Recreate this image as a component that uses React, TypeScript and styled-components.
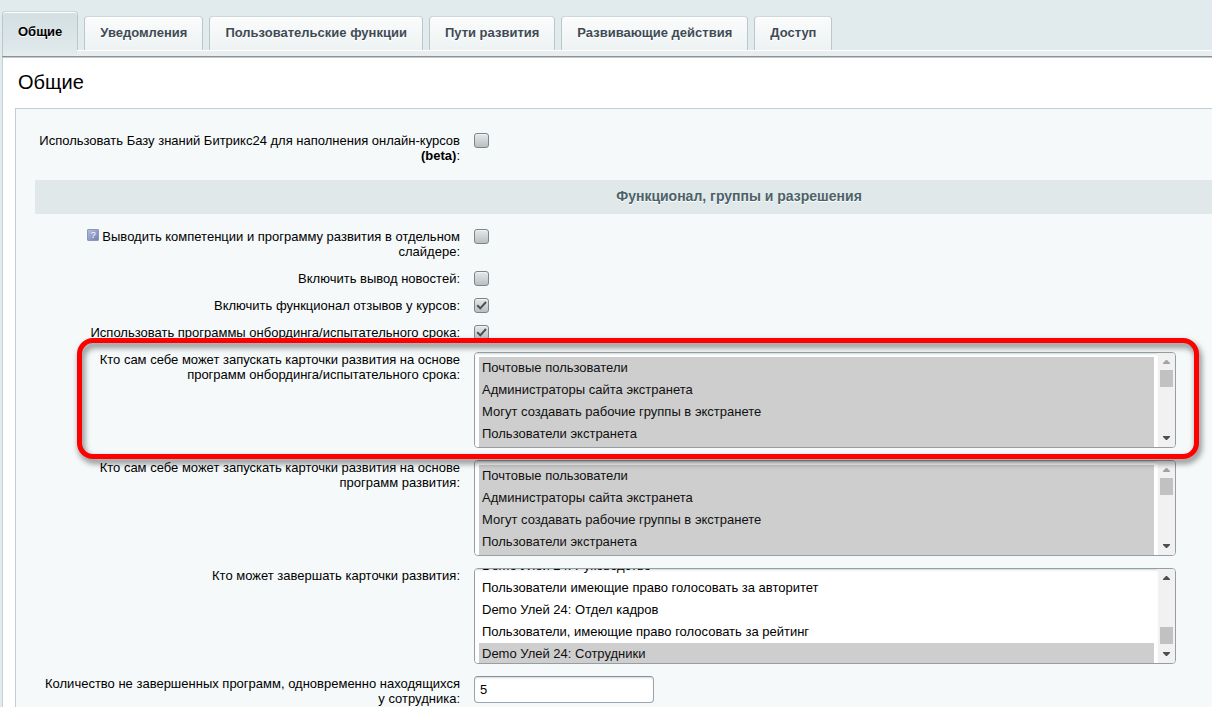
import React, { useEffect, useRef } from "react";
import styled, { createGlobalStyle } from "styled-components";

const GlobalStyle = createGlobalStyle`
  * { box-sizing: border-box; }
  html { overflow: auto; scrollbar-width: none; }
  body {
    margin: 0;
    background: #e1eaec;
    color: #000;
    font: 13px/15px "Liberation Sans", Arial, sans-serif;
  }
`;

const Page = styled.div`
  min-width: 1463px;
  padding-left: 2px;
`;

const TabBar = styled.nav`
  display: flex;
  align-items: flex-end;
  gap: 6px;
  padding-top: 11px;
`;

const Tab = styled.button<{ $active?: boolean }>`
  position: relative;
  height: ${(p) => (p.$active ? 39 : 34)}px;
  padding: ${(p) => (p.$active ? "0 15px" : "0 15px 2px")};
  border: 1px solid #bcc7cb;
  border-top-color: #cdd7da;
  border-bottom: 0;
  border-radius: 4px 4px 0 0;
  background: ${(p) =>
    p.$active
      ? "linear-gradient(#d3dfe1, #dfe8ea)"
      : "linear-gradient(#fbfcfc, #edf2f3)"};
  box-shadow: inset 0 1px 0 #fff;
  color: ${(p) => (p.$active ? "#000" : "#3f4b54")};
  font: bold 13px/15px "Liberation Sans", Arial, sans-serif;
  text-shadow: 0 1px 0 #fff;
  white-space: nowrap;

  &::after {
    content: ${(p) => (p.$active ? '""' : "none")};
    position: absolute;
    top: 100%;
    left: -1px;
    right: 0;
    height: 6px;
    border-left: 1px solid #bcc7cb;
    background: linear-gradient(#dfe8ea, #e8eeef);
  }
`;

const TabRule = styled.div`
  height: 8px;
  border-top: 1px solid #fff;
  border-bottom: 1px solid #c3c8ca;
  box-shadow: inset 0 -1px 0 #8b9296;
  background: #e8eeef;
`;

const Content = styled.main`
  padding: 13px 0 0 12px;
  border-left: 1px solid #c5d1d5;
  background: #fff;
`;

const Title = styled.h1`
  margin: 0 0 15px 3px;
  font-size: 20px;
  line-height: 22px;
  font-weight: normal;
`;

const Form = styled.form`
  padding: 19px;
  border: 1px solid #c2ced5;
  background: #f5f9f9;
`;

const Row = styled.div`
  position: relative;
  display: grid;
  grid-template-columns: 425px 1fr;
  column-gap: 14px;
  align-items: start;
  padding: 5px 0 7px;
`;

const Label = styled.label`
  padding-left: 3px;
  text-align: right;
`;

const SectionTitle = styled.h2`
  margin: 10px 0;
  padding: 8px 8px 10px;
  background: #e0e8ea;
  color: #4b6267;
  font-size: 14px;
  line-height: 16px;
  text-align: center;
  text-shadow: 0 1px 0 #fff;
`;

const Hint = styled.span`
  display: inline-block;
  width: 12px;
  height: 12px;
  margin-right: 3px;
  border: 1px solid #8d98c2;
  border-radius: 1px;
  background: linear-gradient(135deg, #b3bddb, #7681b3);
  color: #fff;
  font-size: 9px;
  line-height: 11px;
  text-align: center;
  vertical-align: top;
`;

const CheckBox = styled.span`
  position: relative;
  display: block;
  width: 15px;
  height: 15px;

  input {
    display: block;
    appearance: none;
    width: 15px;
    height: 15px;
    margin: 0;
    border: 1px solid #7c8589;
    border-radius: 3px;
    background: linear-gradient(#e6e8e9, #b9bfc2);
    box-shadow: inset 0 1px 0 #f0f2f2;
  }
  svg {
    position: absolute;
    inset: 0;
    display: none;
    pointer-events: none;
  }
  input:checked + svg { display: block; }
`;

const ListFrame = styled.div`
  position: relative;
  display: flex;
  width: 702px;
  height: 96px;
  overflow: hidden;
  border: 1px solid #979ea2;
  border-radius: 4px;
  background: #fff;
`;

const List = styled.select`
  flex: 1;
  min-width: 0;
  height: 94px;
  margin: 0;
  padding: 4px;
  border: 0;
  outline: 0;
  background: #fff;
  box-shadow: inset 0 2px 2px -1px #cfd8da;
  color: #000;
  font: 13px/15px "Liberation Sans", Arial, sans-serif;
  scrollbar-width: none;

  option {
    min-height: 22px;
    padding: 3px 3px 4px;
  }
`;

const Track = styled.div`
  display: flex;
  flex-direction: column;
  width: 17px;
  background: #f1f1f1;
`;

const Arrow = styled.svg`
  width: 17px;
  height: 17px;
`;

const Thumb = styled.div<{ $end?: boolean }>`
  width: 13px;
  height: 17px;
  margin: ${(p) => (p.$end ? "auto 2px 2px" : "0 2px auto")};
  background: #c1c1c1;
`;

const NumberBox = styled.input`
  width: 180px;
  height: 27px;
  padding: 0 5px;
  border: 1px solid #9aa4ae;
  border-top-color: #87919c;
  border-radius: 4px;
  background: #fff;
  box-shadow: inset 0 2px 2px -1px #d3dbdd;
  font: 13px/15px "Liberation Sans", Arial, sans-serif;
`;

const Highlight = styled.div`
  position: absolute;
  z-index: 2;
  top: -9px;
  left: 42px;
  width: 1122px;
  height: 121px;
  border: 5px solid #fe0000;
  border-radius: 16px;
  filter: drop-shadow(2px 4px 3px rgba(0, 0, 0, 0.55));
  pointer-events: none;
`;

const tabs = [
  "Общие",
  "Уведомления",
  "Пользовательские функции",
  "Пути развития",
  "Развивающие действия",
  "Доступ",
];

const extranetGroups = [
  "Почтовые пользователи",
  "Администраторы сайта экстранета",
  "Могут создавать рабочие группы в экстранете",
  "Пользователи экстранета",
  "Demo Улей 24: Руководство",
];

const finishGroups = [
  "Почтовые пользователи",
  "Пользователи экстранета",
  "Demo Улей 24: Руководство",
  "Пользователи имеющие право голосовать за авторитет",
  "Demo Улей 24: Отдел кадров",
  "Пользователи, имеющие право голосовать за рейтинг",
  "Demo Улей 24: Сотрудники",
];

function CheckRow(props: { id: string; checked?: boolean; children: React.ReactNode }) {
  return (
    <Row>
      <Label htmlFor={props.id}>{props.children}</Label>
      <CheckBox>
        <input type="checkbox" id={props.id} defaultChecked={props.checked} />
        <svg width="15" height="15" viewBox="0 0 15 15" fill="none">
          <path d="M3.2 7.2 L6.3 10.3 L12 4" stroke="#4b5256" strokeWidth="2" />
        </svg>
      </CheckBox>
    </Row>
  );
}

function ListRow(props: {
  id: string;
  options: string[];
  selected: string[];
  scrolled?: number;
  marked?: boolean;
  children: React.ReactNode;
}) {
  const list = useRef<HTMLSelectElement>(null);
  const scrolled = props.scrolled ?? 0;

  // The browser first scrolls a list to its selected option; ours comes after that.
  useEffect(() => {
    let frame = requestAnimationFrame(() => {
      frame = requestAnimationFrame(() => {
        if (list.current) list.current.scrollTop = scrolled;
      });
    });
    return () => cancelAnimationFrame(frame);
  }, [scrolled]);

  return (
    <Row>
      <Label htmlFor={props.id}>{props.children}</Label>
      <ListFrame>
        <List id={props.id} ref={list} multiple size={4} defaultValue={props.selected}>
          {props.options.map((name) => (
            <option key={name}>{name}</option>
          ))}
        </List>
        <Track aria-hidden="true">
          <Arrow viewBox="0 0 17 17">
            <path d="M5 11h7v-1L9 7H8L5 10z" fill={scrolled > 0 ? "#505050" : "#a3a3a3"} />
          </Arrow>
          <Thumb $end={scrolled > 0} />
          <Arrow viewBox="0 0 17 17">
            <path d="M5 6h7v1L9 10H8L5 7z" fill="#505050" />
          </Arrow>
        </Track>
      </ListFrame>
      {props.marked && <Highlight />}
    </Row>
  );
}

export default function App() {
  return (
    <>
      <GlobalStyle />
      <Page>
        <TabBar>
          {tabs.map((name, i) => (
            <Tab key={name} type="button" $active={i === 0}>
              {name}
            </Tab>
          ))}
        </TabBar>
        <TabRule />
        <Content>
          <Title>Общие</Title>
          <Form>
            <CheckRow id="knowledge">
              Использовать Базу знаний Битрикс24 для наполнения онлайн-курсов <b>(beta)</b>:
            </CheckRow>
            <SectionTitle>Функционал, группы и разрешения</SectionTitle>
            <CheckRow id="slider">
              <Hint>?</Hint>
              Выводить компетенции и программу развития в отдельном слайдере:
            </CheckRow>
            <CheckRow id="news">Включить вывод новостей:</CheckRow>
            <CheckRow id="reviews" checked>
              Включить функционал отзывов у курсов:
            </CheckRow>
            <CheckRow id="onboarding" checked>
              Использовать программы онбординга/испытательного срока:
            </CheckRow>
            <ListRow id="start-onboarding" options={extranetGroups} selected={extranetGroups} marked>
              Кто сам себе может запускать карточки развития на основе программ
              онбординга/испытательного срока:
            </ListRow>
            <ListRow id="start-growth" options={extranetGroups} selected={extranetGroups}>
              Кто сам себе может запускать карточки развития на основе программ развития:
            </ListRow>
            <ListRow
              id="finish"
              options={finishGroups}
              selected={["Demo Улей 24: Сотрудники"]}
              scrolled={62}
            >
              Кто может завершать карточки развития:
            </ListRow>
            <Row>
              <Label htmlFor="limit">
                Количество не завершенных программ, одновременно находящихся у сотрудника:
              </Label>
              <NumberBox id="limit" type="text" defaultValue="5" />
            </Row>
          </Form>
        </Content>
      </Page>
    </>
  );
}
